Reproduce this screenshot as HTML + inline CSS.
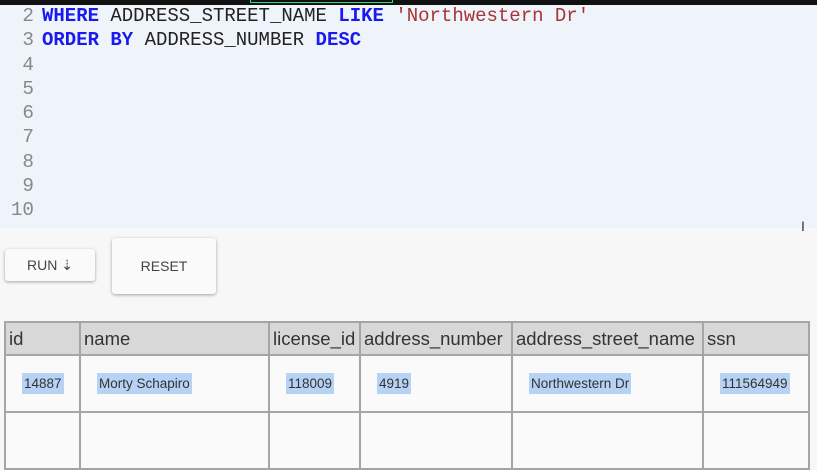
<!DOCTYPE html>
<html><head><style>
body{margin:0;width:817px;height:428px;overflow:hidden;background:#f7f7f7;position:relative;font-family:"Liberation Sans",sans-serif}
.top{position:absolute;left:0;top:0;width:817px;height:5px;background:#111}
.grn{position:absolute;left:250px;top:0;width:141px;height:2px;border:1px solid #2fe08a;border-top:none}
.ed{position:absolute;left:0;top:5px;width:817px;height:223px;background:#eef4fa}
.ln{position:absolute;font-family:"Liberation Mono",monospace;font-size:19.3px;line-height:24.3px;white-space:pre}
.num{left:0;width:34px;text-align:right;color:#888;top:-1px}
.code{left:42px;top:-1px;color:#222;transform:scaleX(0.985);transform-origin:0 0}
.k{color:#1a1aee;font-weight:bold}
.s{color:#a33}
.btn{position:absolute;background:#fafafa;border-radius:3px;box-shadow:0 1px 3px rgba(0,0,0,.35);color:#444;font-size:14px;text-align:center}
table{position:absolute;left:4px;top:321px;border-collapse:collapse;width:806px;table-layout:fixed}
td,th{border:2px solid #a5a5a5;padding:0 3px;text-align:left;overflow:hidden;white-space:nowrap}
th{background:#d8d8d8;height:31px;font-weight:normal;font-size:18.5px;color:#333}
td{background:#fafafa;height:55px;font-size:13.5px;color:#333;padding-left:16px}
td span{background:#b6d2f5;padding:3px 2px}
</style></head><body>
<div class="top"></div><div class="grn"></div>
<div class="ed">
<div class="ln num">2
3
4
5
6
7
8
9
10</div>
<div class="ln code"><span class="k">WHERE</span> ADDRESS_STREET_NAME <span class="k">LIKE</span> <span class="s">'Northwestern Dr'</span>
<span class="k">ORDER BY</span> ADDRESS_NUMBER <span class="k">DESC</span></div>
</div>
<div style="position:absolute;left:801px;top:218px;font-size:14px;color:#333">I</div>
<div class="btn" style="left:5px;top:249px;width:90px;height:32px;line-height:32px">RUN ⇣</div>
<div class="btn" style="left:112px;top:238px;width:104px;height:56px;line-height:56px">RESET</div>
<table>
<colgroup><col style="width:75px"><col style="width:189px"><col style="width:91px"><col style="width:152px"><col style="width:191px"><col></colgroup>
<tr><th>id</th><th>name</th><th>license_id</th><th>address_number</th><th>address_street_name</th><th>ssn</th></tr>
<tr><td><span>14887</span></td><td><span>Morty Schapiro</span></td><td><span>118009</span></td><td><span>4919</span></td><td><span>Northwestern Dr</span></td><td><span>111564949</span></td></tr>
<tr><td></td><td></td><td></td><td></td><td></td><td></td></tr>
</table>
</body></html>
